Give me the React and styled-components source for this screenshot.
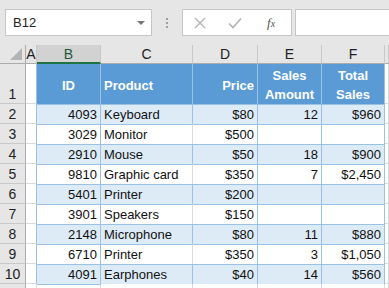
import React from "react";
import styled, { createGlobalStyle } from "styled-components";

const GlobalStyle = createGlobalStyle`
  html, body {
    margin: 0;
    padding: 0;
    background: #e6e6e6;
    font-family: "Liberation Sans", Arial, sans-serif;
  }
`;

const Page = styled.div`
  width: 389px;
  height: 288px;
  overflow: hidden;
  background: #e6e6e6;
`;

const FormulaBar = styled.div`
  display: flex;
  align-items: flex-start;
  height: 45px;
  padding: 9px 0 0 5px;
  box-sizing: border-box;
`;

const NameBox = styled.div`
  width: 147px;
  height: 27px;
  box-sizing: border-box;
  background: #fff;
  border: 1px solid #c6c6c6;
  display: flex;
  align-items: center;
  justify-content: space-between;
  padding: 0 6px 0 7px;
  font-size: 13px;
  color: #222;
`;

const Caret = styled.span`
  width: 0;
  height: 0;
  border-left: 4px solid transparent;
  border-right: 4px solid transparent;
  border-top: 4px solid #777;
  margin-top: 1px;
`;

const Grip = styled.div`
  width: 30px;
  height: 27px;
  display: flex;
  flex-direction: column;
  align-items: center;
  justify-content: center;
  gap: 2px;
  span {
    width: 2px;
    height: 2px;
    background: #a0a0a0;
  }
`;

const ButtonBox = styled.div`
  width: 110px;
  height: 27px;
  box-sizing: border-box;
  background: #fff;
  border: 1px solid #c6c6c6;
  display: flex;
  align-items: center;
  padding-left: 10px;
`;

const ToolIcon = styled.svg`
  margin-right: ${p => p.$gap}px;
`;

const FxLabel = styled.span`
  font-family: "Liberation Serif", serif;
  font-style: italic;
  font-size: 13px;
  color: #555;
  sub {
    font-size: 10px;
    vertical-align: baseline;
  }
`;

const FormulaInput = styled.div`
  flex: 1;
  height: 27px;
  margin-left: 3px;
  box-sizing: border-box;
  background: #fff;
  border: 1px solid #c6c6c6;
  border-right: none;
`;

const Sheet = styled.div`
  display: grid;
  grid-template-columns: 26px 11px 64px 92px 65px 64px 63px 1fr;
  grid-template-rows: 19px 40px repeat(10, 20px);
  font-size: 13px;
  color: #111;
`;

const ColHead = styled.div`
  box-sizing: border-box;
  background: ${p => (p.$selected ? "#d2d2d2" : "#e6e6e6")};
  border-right: 1px solid #c8c8c8;
  border-bottom: ${p => (p.$selected ? "2px solid #217346" : "1px solid #ababab")};
  color: ${p => (p.$selected ? "#1e5a38" : "#222")};
  display: flex;
  align-items: center;
  justify-content: center;
  font-size: 14px;
`;

const Corner = styled.div`
  position: relative;
  box-sizing: border-box;
  background: #e6e6e6;
  border-right: 1px solid #ababab;
  border-bottom: 1px solid #ababab;
`;

const CornerMark = styled.span`
  position: absolute;
  right: 3px;
  bottom: 3px;
  width: 0;
  height: 0;
  border-left: 12px solid transparent;
  border-bottom: 12px solid #b4b4b4;
`;

const RowHead = styled.div`
  box-sizing: border-box;
  background: #e6e6e6;
  border-right: 1px solid #ababab;
  border-bottom: 1px solid #c8c8c8;
  display: flex;
  align-items: ${p => (p.$bottom ? "flex-end" : "center")};
  justify-content: center;
  padding-bottom: ${p => (p.$bottom ? "1px" : "0")};
  font-size: 14px;
  color: #222;
`;

const Blank = styled.div`
  box-sizing: border-box;
  background: #fff;
  border-right: 1px solid ${p => p.$edge || "#dadada"};
  border-bottom: 1px solid #dadada;
`;

const Head = styled.div`
  box-sizing: border-box;
  background: #5b9bd5;
  border-right: 1px solid #9bc2e6;
  color: #fff;
  font-weight: bold;
  display: flex;
  align-items: center;
  justify-content: ${p => p.$align || "center"};
  text-align: center;
  line-height: 19px;
  padding: 2px 3px 0;
`;

const Cell = styled.div`
  box-sizing: border-box;
  background: ${p => (p.$band ? "#ddebf7" : "#fff")};
  border-right: 1px solid ${p => (p.$plain && !p.$band ? "#dadada" : "#9bc2e6")};
  border-top: 1px solid #9bc2e6;
  display: flex;
  align-items: center;
  justify-content: ${p => (p.$right ? "flex-end" : "flex-start")};
  padding: 0 3px;
  white-space: nowrap;
`;

const rows = [
  [4093, "Keyboard", "$80", 12, "$960"],
  [3029, "Monitor", "$500", "", ""],
  [2910, "Mouse", "$50", 18, "$900"],
  [9810, "Graphic card", "$350", 7, "$2,450"],
  [5401, "Printer", "$200", "", ""],
  [3901, "Speakers", "$150", "", ""],
  [2148, "Microphone", "$80", 11, "$880"],
  [6710, "Printer", "$350", 3, "$1,050"],
  [4091, "Earphones", "$40", 14, "$560"],
];

const letters = ["A", "B", "C", "D", "E", "F", "G"];

export default function App() {
  return (
    <Page>
      <GlobalStyle />
      <FormulaBar>
        <NameBox>
          <span>B12</span>
          <Caret />
        </NameBox>
        <Grip>
          <span />
          <span />
          <span />
        </Grip>
        <ButtonBox>
          <ToolIcon $gap={20} width="14" height="14" viewBox="0 0 14 14">
            <path d="M2 2L12 12M12 2L2 12" stroke="#b3b3b3" strokeWidth="1.4" fill="none" />
          </ToolIcon>
          <ToolIcon $gap={24} width="16" height="14" viewBox="0 0 16 14">
            <path d="M2 7.5L6 11.5L14 2.5" stroke="#b3b3b3" strokeWidth="1.6" fill="none" />
          </ToolIcon>
          <FxLabel>
            f<sub>x</sub>
          </FxLabel>
        </ButtonBox>
        <FormulaInput />
      </FormulaBar>

      <Sheet>
        <Corner>
          <CornerMark />
        </Corner>
        {letters.map(l => (
          <ColHead key={l} $selected={l === "B"}>
            {l === "G" ? "" : l}
          </ColHead>
        ))}

        <RowHead $bottom>1</RowHead>
        <Blank $edge="#9bc2e6" />
        <Head>ID</Head>
        <Head $align="flex-start">Product</Head>
        <Head $align="flex-end">Price</Head>
        <Head>
          Sales
          <br />
          Amount
        </Head>
        <Head>
          Total
          <br />
          Sales
        </Head>
        <Blank />

        {rows.map((r, i) => {
          const band = i % 2 === 0;
          return (
            <React.Fragment key={i}>
              <RowHead>{i + 2}</RowHead>
              <Blank $edge="#9bc2e6" />
              <Cell $band={band} $right>{r[0]}</Cell>
              <Cell $band={band} $plain>{r[1]}</Cell>
              <Cell $band={band} $right>{r[2]}</Cell>
              <Cell $band={band} $right>{r[3]}</Cell>
              <Cell $band={band} $right>{r[4]}</Cell>
              <Blank />
            </React.Fragment>
          );
        })}

        <RowHead />
        <Blank />
        <Cell $plain />
        <Blank />
        <Blank />
        <Blank />
        <Blank />
        <Blank />
      </Sheet>
    </Page>
  );
}
